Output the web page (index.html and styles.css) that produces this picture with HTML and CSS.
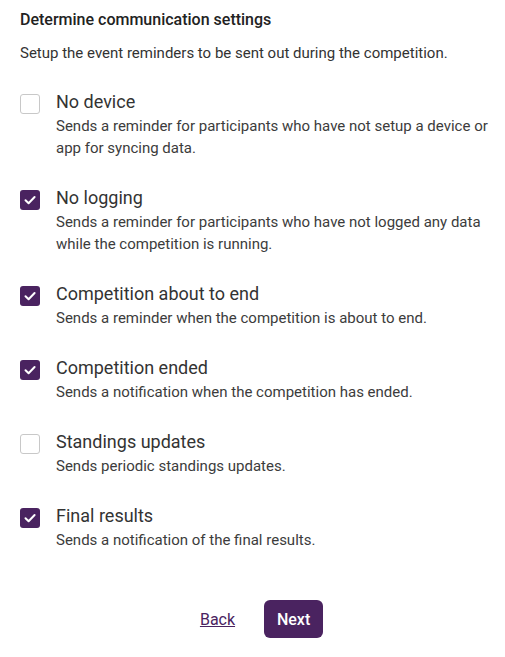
FILE: index.html
```html
<!DOCTYPE html>
<html>
<head>
<meta charset="utf-8">
<link rel="stylesheet" href="styles.css">
</head>
<body>
<div class="page">
  <h1 class="title">Determine communication settings</h1>
  <p class="subtitle">Setup the event reminders to be sent out during the competition.</p>
  <ul class="options">
    <li class="option">
      <span class="box"></span>
      <div class="text">
        <div class="label">No device</div>
        <div class="desc">Sends a reminder for participants who have not setup a device or app for syncing data.</div>
      </div>
    </li>
    <li class="option">
      <span class="box checked"><svg viewBox="0 0 20 20" width="20" height="20"><path d="M5.5 10.3 L8.6 13.3 L14.6 7" fill="none" stroke="#fff" stroke-width="2" stroke-linecap="round" stroke-linejoin="round"/></svg></span>
      <div class="text">
        <div class="label">No logging</div>
        <div class="desc">Sends a reminder for participants who have not logged any data while the competition is running.</div>
      </div>
    </li>
    <li class="option">
      <span class="box checked"><svg viewBox="0 0 20 20" width="20" height="20"><path d="M5.5 10.3 L8.6 13.3 L14.6 7" fill="none" stroke="#fff" stroke-width="2" stroke-linecap="round" stroke-linejoin="round"/></svg></span>
      <div class="text">
        <div class="label">Competition about to end</div>
        <div class="desc">Sends a reminder when the competition is about to end.</div>
      </div>
    </li>
    <li class="option">
      <span class="box checked"><svg viewBox="0 0 20 20" width="20" height="20"><path d="M5.5 10.3 L8.6 13.3 L14.6 7" fill="none" stroke="#fff" stroke-width="2" stroke-linecap="round" stroke-linejoin="round"/></svg></span>
      <div class="text">
        <div class="label">Competition ended</div>
        <div class="desc">Sends a notification when the competition has ended.</div>
      </div>
    </li>
    <li class="option">
      <span class="box"></span>
      <div class="text">
        <div class="label">Standings updates</div>
        <div class="desc">Sends periodic standings updates.</div>
      </div>
    </li>
    <li class="option">
      <span class="box checked"><svg viewBox="0 0 20 20" width="20" height="20"><path d="M5.5 10.3 L8.6 13.3 L14.6 7" fill="none" stroke="#fff" stroke-width="2" stroke-linecap="round" stroke-linejoin="round"/></svg></span>
      <div class="text">
        <div class="label">Final results</div>
        <div class="desc">Sends a notification of the final results.</div>
      </div>
    </li>
  </ul>
  <div class="actions">
    <a class="back" href="#">Back</a>
    <button class="next">Next</button>
  </div>
</div>
</body>
</html>
```
FILE: styles.css
```css
html, body {
  margin: 0;
  padding: 0;
  background: #fff;
}
body {
  font-family: Roboto, "Liberation Sans", sans-serif;
  color: #333;
}
.page {
  padding: 9px 16px 0 20px;
}
.title {
  margin: 0;
  font-size: 16px;
  font-weight: 500;
  line-height: 22px;
  color: #222;
}
.subtitle {
  margin: 12px 0 0;
  font-size: 15px;
  line-height: 20px;
  color: #333;
}
.options {
  list-style: none;
  margin: 27px 0 0;
  padding: 0;
}
.option {
  display: flex;
  align-items: flex-start;
  gap: 16px;
  margin-bottom: 27px;
}
.box {
  flex: none;
  width: 20px;
  height: 20px;
  box-sizing: border-box;
  border: 1px solid #c8c8c8;
  border-radius: 3px;
  margin-top: 4px;
  background: #fff;
}
.box.checked {
  border: none;
  background: #4a2360;
}
.box svg {
  display: block;
}
.label {
  font-size: 18px;
  line-height: 24px;
  color: #333;
}
.desc {
  font-size: 15px;
  line-height: 22px;
  color: #3c3c3c;
  margin-top: 1px;
}
.actions {
  display: flex;
  justify-content: center;
  align-items: center;
  gap: 29px;
  margin-top: 49px;
  padding-left: 14px;
}
.back {
  font-size: 16px;
  color: #4a2360;
  text-decoration: underline;
}
.next {
  font-family: Roboto, "Liberation Sans", sans-serif;
  font-size: 16px;
  font-weight: 500;
  color: #fff;
  background: #4a2360;
  border: none;
  border-radius: 6px;
  width: 59px;
  height: 38px;
  padding: 0;
}
```
